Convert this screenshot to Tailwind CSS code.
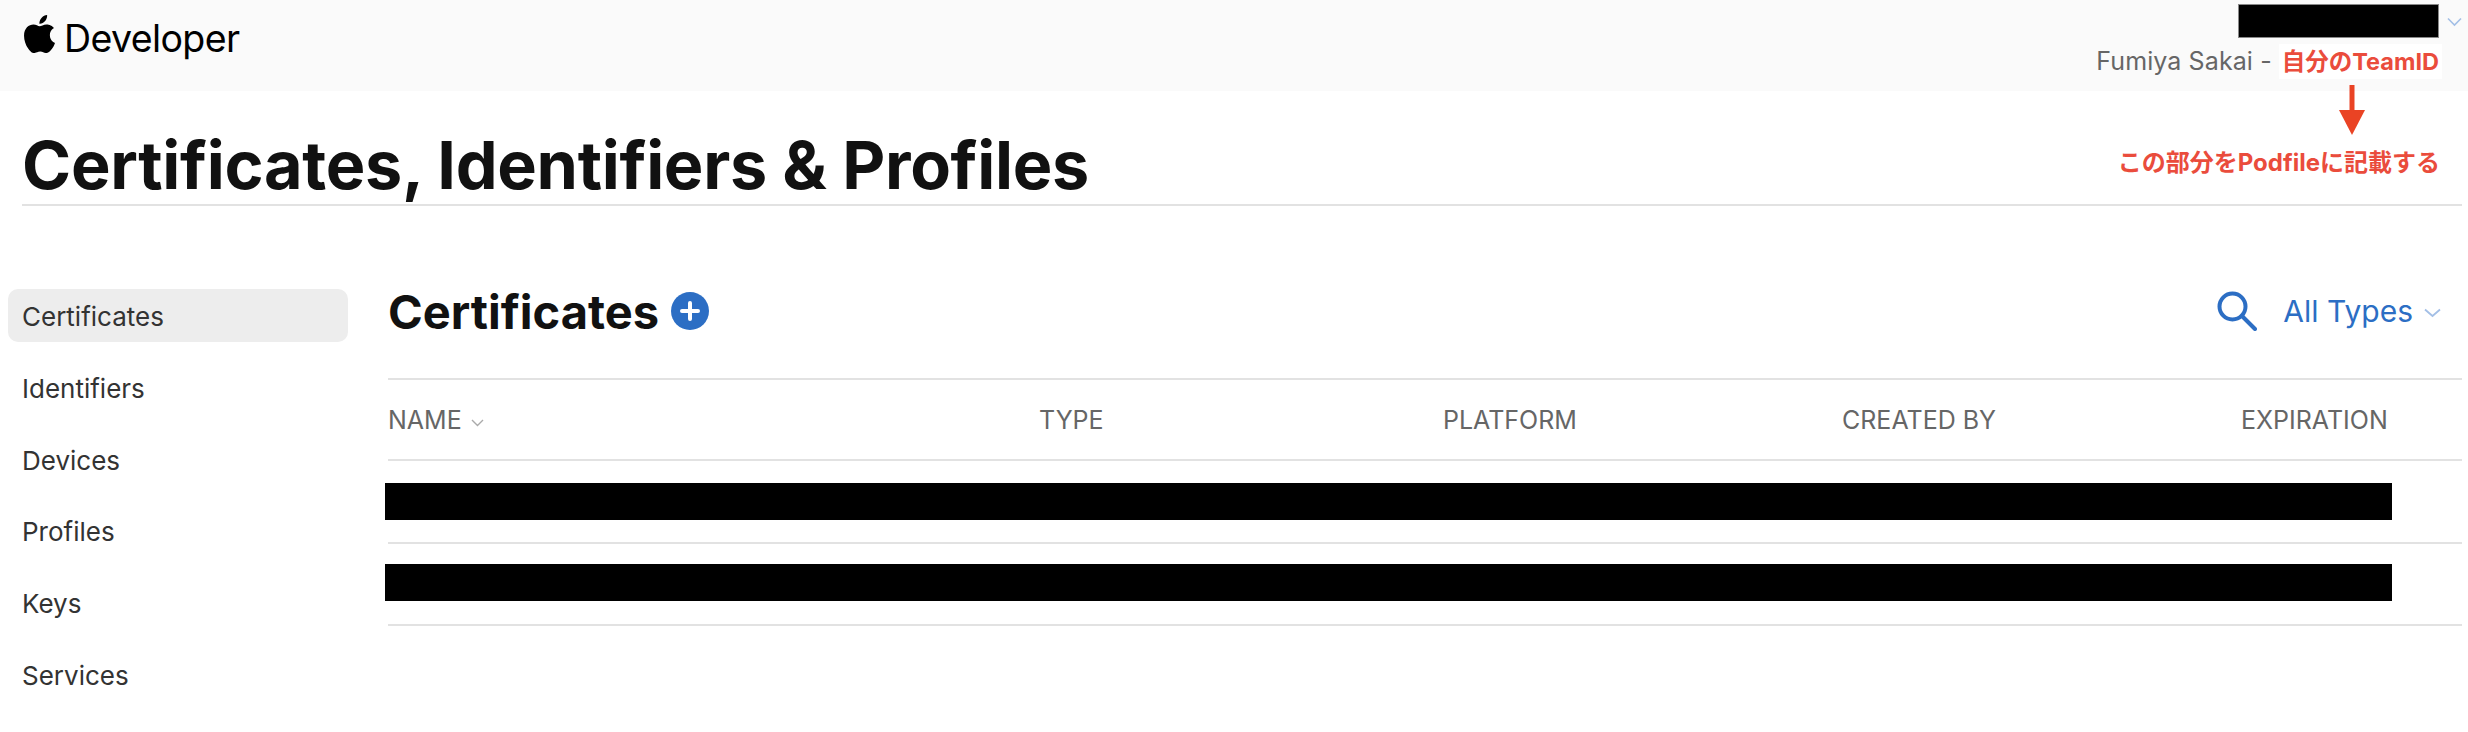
<!DOCTYPE html>
<html lang="en">
<head>
  <meta charset="UTF-8" />
  <title>Certificates, Identifiers &amp; Profiles</title>
  <script src="https://cdn.jsdelivr.net/npm/@tailwindcss/browser@4"></script>
</head>
<body class="relative h-[732px] overflow-hidden bg-white font-['Inter',sans-serif] text-[#111]">
  <!-- Global nav -->
  <header class="flex h-[91px] justify-between bg-[#fafafa]">
    <div class="flex h-[70px] items-center gap-[9px] pl-[24px] pt-[8px]">
      <svg class="mb-[10px] h-[38px] w-[31px]" viewBox="0 0 814 1000" fill="#000"><path d="M788 341c-6 4-108 62-108 190 0 149 130 201 134 203-1 3-21 72-69 143-43 62-88 124-156 124s-86-40-164-40c-76 0-103 41-165 41s-106-57-156-127C46 793 0 666 0 546c0-193 125-295 249-295 66 0 121 43 162 43 40 0 102-46 177-46 29 0 131 3 200 93zM555 159c31-37 53-88 53-139 0-7-1-14-2-20-51 2-111 34-147 76-28 32-55 83-55 135 0 8 1 16 2 18 3 1 9 2 14 2 46 0 103-31 135-72z"/></svg>
      <span class="text-[37.500px] leading-none tracking-[-0.6px] text-black">Developer</span>
    </div>
    <div class="flex flex-col items-end pr-[6px]">
      <div class="flex h-[43px] items-start pt-[4px]">
        <div class="h-[34px] w-[201px] border border-[#888] bg-black"></div>
        <svg class="ml-[8px] mt-[13px] h-[10px] w-[15px]" viewBox="0 0 15 10" fill="none" stroke="#a3bfe6" stroke-width="1.6"><path d="M1 1.500 7.500 8 14 1.500"/></svg>
      </div>
      <div class="flex items-center pr-[20px]">
        <span class="text-[25px] tracking-[0.1px] text-[#666]">Fumiya Sakai -</span>
        <span class="ml-[7px] flex h-[35px] items-center bg-white px-[3px] font-['Inter','Noto_Sans_CJK_JP',sans-serif] text-[23.500px] font-bold text-[#ea4c3c]">自分のTeamID</span>
      </div>
    </div>
  </header>

  <!-- Page title -->
  <div class="ml-[22px] mr-[6px] flex h-[115px] items-end border-b-2 border-[#e2e2e2] pb-[6px]">
    <h1 class="text-[66.500px] font-bold leading-none tracking-[-0.3px] text-[#111]">Certificates, Identifiers &amp; Profiles</h1>
  </div>

  <div class="flex">
    <!-- Sidebar -->
    <nav class="ml-[8px] mt-[83px] w-[340px] shrink-0 text-[26px] text-[#333]">
      <a class="flex h-[53px] items-center rounded-[10px] bg-[#ededed] pl-[14px] pt-[1px]">Certificates</a>
      <a class="mt-[19px] flex h-[53px] items-center pl-[14px] pt-[1px]">Identifiers</a>
      <a class="mt-[19px] flex h-[53px] items-center pl-[14px] pt-[1px]">Devices</a>
      <a class="mt-[19px] flex h-[53px] items-center pl-[14px]">Profiles</a>
      <a class="mt-[19px] flex h-[53px] items-center pl-[14px]">Keys</a>
      <a class="mt-[19px] flex h-[53px] items-center pl-[14px]">Services</a>
    </nav>

    <!-- Content -->
    <main class="ml-[40px] mr-[6px] min-w-0 flex-1">
      <div class="mt-[71px] flex h-[68px] items-center justify-between">
        <div class="flex items-center gap-[12px]">
          <h2 class="text-[47px] font-bold leading-none text-[#111]">Certificates</h2>
          <svg class="h-[38px] w-[38px]" viewBox="0 0 38 38"><circle cx="19" cy="19" r="19" fill="#2c6ec4"/><path d="M19 11v16M11 19h16" stroke="#fff" stroke-width="4" stroke-linecap="round"/></svg>
        </div>
        <div class="flex items-center">
          <svg class="h-[40px] w-[40px]" viewBox="0 0 40 40" fill="none" stroke="#2c6ec4" stroke-width="4" stroke-linecap="round"><circle cx="15.500" cy="15.500" r="13"/><path d="M25 25 38 38"/></svg>
          <span class="ml-[26px] text-[30px] leading-none text-[#2c6ec4]">All Types</span>
          <svg class="ml-[11px] mr-[21px] mt-[4px] h-[10px] w-[17px]" viewBox="0 0 17 10" fill="none" stroke="#a3bfe6" stroke-width="1.8"><path d="M1 1.500 8.500 8 16 1.500"/></svg>
        </div>
      </div>

      <div class="mt-[33px] grid h-[83px] grid-cols-[651px_404px_399px_399px_1fr] items-center border-y-2 border-[#e2e2e2] pt-[3px] text-[25px] text-[#666]">
        <div class="flex items-center">NAME<svg class="ml-[9px] mt-[3px] h-[8px] w-[13px]" viewBox="0 0 13 8" fill="none" stroke="#aaa" stroke-width="1.4"><path d="M1 1 6.500 6.500 12 1"/></svg></div>
        <div>TYPE</div>
        <div>PLATFORM</div>
        <div>CREATED BY</div>
        <div>EXPIRATION</div>
      </div>
      <div class="flex h-[83px] items-center border-b-2 border-[#e2e2e2]">
        <div class="-ml-[3px] h-[37px] w-[2007px] bg-black"></div>
      </div>
      <div class="flex h-[82px] items-center border-b-2 border-[#e2e2e2] pb-[3px]">
        <div class="-ml-[3px] h-[37px] w-[2007px] bg-black"></div>
      </div>
    </main>
  </div>

  <!-- Annotation laid over the page -->
  <div class="absolute left-[2339px] top-[85px]">
    <svg class="h-[50px] w-[26px]" viewBox="0 0 26 50" fill="#ea4324"><path d="M10.500 0h5v26h-5z"/><path d="M0 25h26L13 50z"/></svg>
  </div>
  <div class="absolute right-[28px] top-[145px] font-['Inter','Noto_Sans_CJK_JP',sans-serif] text-[24px] font-bold text-[#ea4c3c]">この部分をPodfileに記載する</div>
</body>
</html>
